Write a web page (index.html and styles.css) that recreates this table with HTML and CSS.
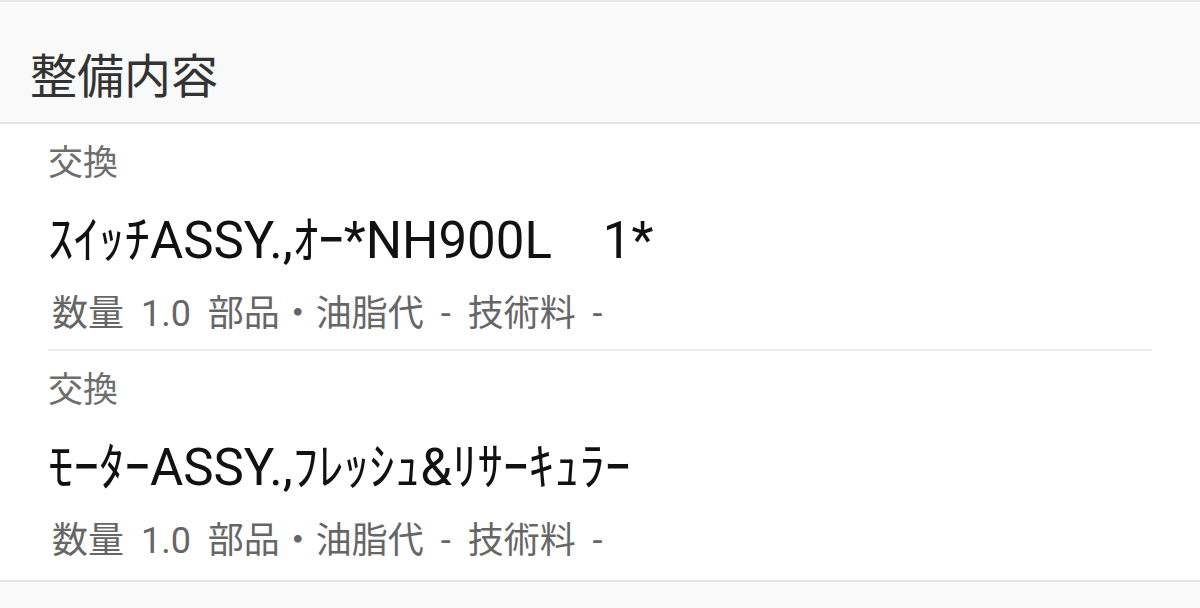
FILE: index.html
```html
<!DOCTYPE html>
<html lang="ja">
<head>
  <meta charset="UTF-8">
  <meta name="viewport" content="width=device-width, initial-scale=1.0">
  <title>整備内容</title>
  <link rel="stylesheet" href="styles.css">
</head>
<body>
  <section class="panel">
    <header class="panel-head">
      <h1>整備内容</h1>
    </header>

    <ul class="work-list">
      <li class="work-item">
        <div class="work-type">交換</div>
        <div class="work-name">ｽｲｯﾁASSY.,ｵｰ*NH900L　1*</div>
        <div class="work-meta">数量 1.0 部品・油脂代 - 技術料 -</div>
      </li>
      <li class="work-item">
        <div class="work-type">交換</div>
        <div class="work-name">ﾓｰﾀｰASSY.,ﾌﾚｯｼｭ&amp;ﾘｻｰｷｭﾗｰ</div>
        <div class="work-meta">数量 1.0 部品・油脂代 - 技術料 -</div>
      </li>
    </ul>
  </section>
</body>
</html>
```

FILE: styles.css
```css
body {
  margin: 0;
  padding: 0;
  background-color: #f9f9f9;
  font-family: Roboto, "Noto Sans CJK JP", sans-serif;
  color: #333;
}

.panel-head {
  box-sizing: border-box;
  height: 124px;
  padding: 52px 30px 0;
  background: #f9f9f9;
  border-top: 2px solid #e9e9e9;
  border-bottom: 2px solid #e6e6e6;
}

.panel-head h1 {
  margin: 0;
  font-size: 47px;
  line-height: 46px;
  font-weight: normal;
  color: #333;
}

.work-list {
  list-style: none;
  margin: 0;
  padding: 0;
  background: #fff;
  border-bottom: 2px solid #e6e6e6;
}

.work-item {
  margin: 0 48px;
  padding: 16px 0 11px;
  border-bottom: 2px solid #ebebeb;
}

.work-item:last-child {
  border-bottom: none;
  padding-bottom: 15px;
}

.work-type {
  font-size: 35px;
  line-height: 48px;
  color: #6e6e6e;
}

.work-name {
  margin-top: 23px;
  font-size: 51px;
  line-height: 60px;
  color: #111;
  white-space: pre;
}

.work-meta {
  margin-top: 19px;
  padding-left: 4px;
  font-size: 36px;
  line-height: 48px;
  color: #666;
  word-spacing: 8px;
}
```
